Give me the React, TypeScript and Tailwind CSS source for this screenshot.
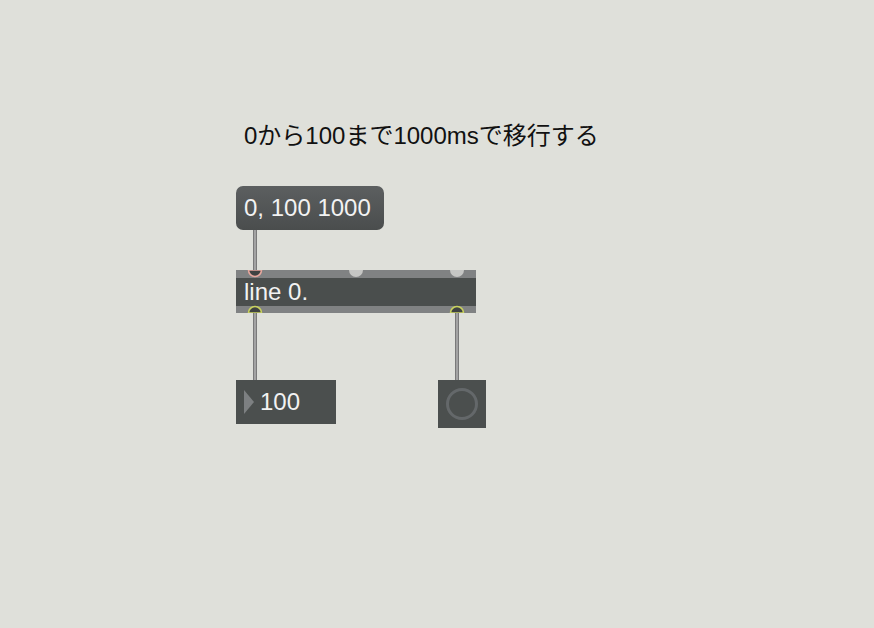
import React from 'react';

const font = { fontFamily: '"Liberation Sans", Arial, "Noto Sans CJK JP", sans-serif' };

// half-circle port drawn on the edge of an object box
function Port({ x, y, kind }: { x: number; y: number; kind: 'hot' | 'cold' | 'out' }) {
  if (kind === 'out') {
    return (
      <svg className="absolute" style={{ left: x - 8, top: y - 8 }} width={16} height={8} viewBox="0 0 16 8">
        <path d="M1.5 8 A6.5 6.5 0 0 1 14.5 8 Z" fill="#3f4242" stroke="#c9d25e" strokeWidth={1.6} />
      </svg>
    );
  }
  return (
    <svg className="absolute" style={{ left: x - 8, top: y }} width={16} height={8} viewBox="0 0 16 8">
      {kind === 'hot' ? (
        <path d="M1.5 0 A6.5 6.5 0 0 0 14.5 0 Z" fill="#3f4242" stroke="#e7a79e" strokeWidth={1.6} />
      ) : (
        <path d="M1 0 A7 7 0 0 0 15 0 Z" fill="#c5c6c4" />
      )}
    </svg>
  );
}

function Cord({ x, top, bottom }: { x: number; top: number; bottom: number }) {
  return (
    <div
      className="absolute w-[4px] bg-[#a3a3a3] border-x border-[#7a7a7a]"
      style={{ left: x - 2, top, height: bottom - top }}
    />
  );
}

export default function App() {
  return (
    <div className="relative w-[874px] h-[628px] bg-[#dfe0da] overflow-hidden" style={font}>
      {/* comment */}
      <div className="absolute left-[244px] top-[121px] text-[24px] leading-[30px] text-[#111] whitespace-nowrap">
        0から100まで1000msで移行する
      </div>

      {/* cords */}
      <Cord x={255} top={229} bottom={272} />
      <Cord x={255} top={311} bottom={381} />
      <Cord x={457} top={311} bottom={381} />

      {/* message box */}
      <div className="absolute left-[236px] top-[186px] w-[148px] h-[44px] rounded-[7px] bg-gradient-to-b from-[#5c5f60] to-[#4a4d4d] flex items-center pl-[8px] text-[24px] text-[#f2f2f2] whitespace-nowrap">
        0, 100 1000
      </div>

      {/* line object */}
      <div className="absolute left-[236px] top-[270px] w-[240px] h-[43px] bg-[#808283] flex flex-col">
        <div className="h-[8px]" />
        <div className="h-[28px] bg-[#4a4e4d] flex items-center pl-[8px] text-[24px] text-[#f2f2f2] whitespace-nowrap">
          line 0.
        </div>
      </div>
      <Port x={255} y={270} kind="hot" />
      <Port x={356} y={270} kind="cold" />
      <Port x={457} y={270} kind="cold" />
      <Port x={255} y={313} kind="out" />
      <Port x={457} y={313} kind="out" />

      {/* number box */}
      <div className="absolute left-[236px] top-[380px] w-[100px] h-[44px] bg-[#4b4f4e] flex items-center pl-[8px] text-[24px] text-[#f2f2f2]">
        <svg width={10} height={24} viewBox="0 0 10 24" className="mr-[6px]">
          <path d="M0 0 L10 12 L0 24 Z" fill="#7d8082" />
        </svg>
        100
      </div>

      {/* button */}
      <div className="absolute left-[438px] top-[380px] w-[48px] h-[48px] bg-[#4b4f4e] flex items-center justify-center">
        <svg width={34} height={34} viewBox="0 0 34 34">
          <circle cx={17} cy={17} r={14.5} fill="none" stroke="#64686a" strokeWidth={3} />
        </svg>
      </div>
    </div>
  );
}
